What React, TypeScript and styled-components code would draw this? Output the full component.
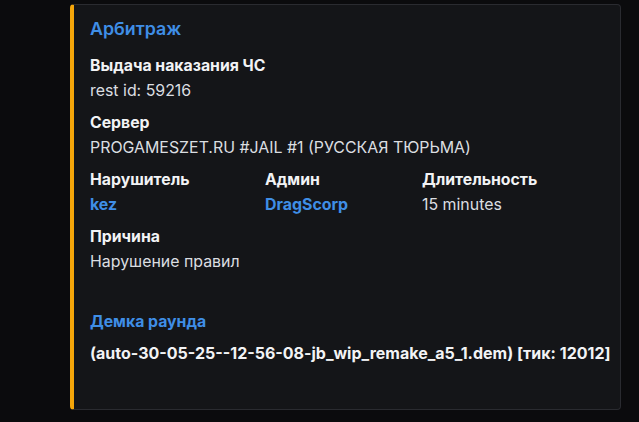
import styled, { createGlobalStyle } from "styled-components";

const GlobalStyle = createGlobalStyle`
  html, body {
    margin: 0;
    padding: 0;
    background: #0b0b0d;
  }
  body {
    font-family: Inter, "Noto Sans", sans-serif;
  }
`;

const Page = styled.div`
  padding: 4px 18px 0 70px;
  height: 422px;
  box-sizing: border-box;
`;

const Embed = styled.div`
  box-sizing: border-box;
  width: 551px;
  height: 406px;
  background: #141518;
  border: 1px solid #2a2b30;
  border-left: 4px solid #f5a60a;
  border-radius: 4px;
  padding: 13px 16px 16px 16px;
`;

const Title = styled.div`
  color: #3f8ee6;
  font-size: 17.8px;
  font-weight: 600;
  line-height: 22px;
  margin-bottom: 15px;
`;

const Fields = styled.div`
  display: grid;
  grid-template-columns: 175px 157px auto;
  row-gap: 10px;
`;

const Field = styled.div<{ $wide?: boolean }>`
  grid-column: ${(p) => (p.$wide ? "1 / -1" : "auto")};
`;

const Name = styled.div<{ $link?: boolean }>`
  color: ${(p) => (p.$link ? "#3f8ee6" : "#f2f3f5")};
  font-size: 15.8px;
  font-weight: 700;
  line-height: 22px;
  margin-bottom: 3px;
`;

const Value = styled.div<{ $link?: boolean; $bold?: boolean }>`
  color: ${(p) => (p.$link ? "#3f8ee6" : "#dbdee1")};
  font-size: 15.9px;
  font-weight: ${(p) => (p.$link || p.$bold ? 700 : 400)};
  line-height: 22px;
  white-space: nowrap;
`;

const Demo = styled.div`
  margin-top: 38px;
`;

const DemoValue = styled(Value)`
  margin-top: 9px;
  font-size: 16px;
  color: #f2f3f5;
`;

export default function App() {
  return (
    <Page>
      <GlobalStyle />
      <Embed>
        <Title>Арбитраж</Title>
        <Fields>
          <Field $wide>
            <Name>Выдача наказания ЧС</Name>
            <Value>rest id: 59216</Value>
          </Field>
          <Field $wide>
            <Name>Сервер</Name>
            <Value>PROGAMESZET.RU #JAIL #1 (РУССКАЯ ТЮРЬМА)</Value>
          </Field>
          <Field>
            <Name>Нарушитель</Name>
            <Value $link>kez</Value>
          </Field>
          <Field>
            <Name>Админ</Name>
            <Value $link>DragScorp</Value>
          </Field>
          <Field>
            <Name>Длительность</Name>
            <Value>15 minutes</Value>
          </Field>
          <Field $wide>
            <Name>Причина</Name>
            <Value>Нарушение правил</Value>
          </Field>
        </Fields>
        <Demo>
          <Name $link>Демка раунда</Name>
          <DemoValue $bold>(auto-30-05-25--12-56-08-jb_wip_remake_a5_1.dem) [тик: 12012]</DemoValue>
        </Demo>
      </Embed>
    </Page>
  );
}
